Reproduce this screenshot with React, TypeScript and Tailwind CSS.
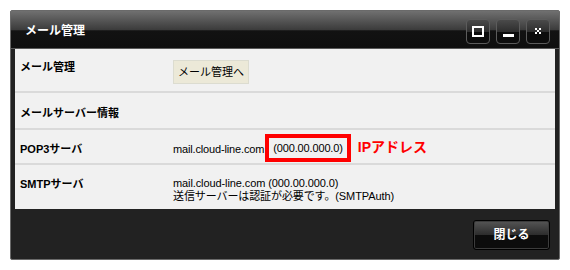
import React from "react";

const jp = { fontFamily: '"Liberation Sans", "Noto Sans CJK JP", sans-serif' };

function TitleBtn({ children }: { children: React.ReactNode }) {
  return (
    <div className="w-[24px] h-[25px] rounded-[4px] border border-[#5c5c5c] bg-[linear-gradient(to_bottom,#4a4a4a_0%,#2e2e2e_50%,#0d0d0d_51%,#0d0d0d_100%)] flex items-center justify-center">
      {children}
    </div>
  );
}

export default function App() {
  return (
    <div className="w-[570px] h-[270px] bg-white pt-[10px] pl-[10px]" style={jp}>
      <div className="w-[550px] h-[250px] border border-[#6a6a6a] bg-[#222222] rounded-[2px] flex flex-col">
        {/* title bar */}
        <div className="h-[38px] border-b border-[#5a5a5a] bg-[linear-gradient(to_bottom,#707070_0%,#3a3a3a_52%,#121212_53%,#0f0f0f_100%)] flex items-center justify-between pl-[14px] pr-[9px]">
          <span className="text-white font-bold text-[12px] leading-none mt-[2px]">メール管理</span>
          <div className="flex gap-[6px] mt-[3px]">
            <TitleBtn>
              <div className="w-[12px] h-[11px] border-2 border-white" />
            </TitleBtn>
            <TitleBtn>
              <div className="w-[11px] h-[3px] bg-white mt-[8px]" />
            </TitleBtn>
            <TitleBtn>
              <svg width="6" height="6" viewBox="0 0 6 6" shapeRendering="crispEdges">
                <rect x="0" y="0" width="2" height="2" fill="white" />
                <rect x="4" y="0" width="2" height="2" fill="white" />
                <rect x="2" y="2" width="2" height="2" fill="white" />
                <rect x="0" y="4" width="2" height="2" fill="white" />
                <rect x="4" y="4" width="2" height="2" fill="white" />
              </svg>
            </TitleBtn>
          </div>
        </div>
        {/* content */}
        <div className="mx-[4px] bg-[#f1f1f1] text-[11px] text-black">
          <div className="h-[44px] border-b-2 border-[#dadada] flex">
            <div className="w-[158px] pl-[5px] pt-[11px] font-bold leading-[14px]">メール管理</div>
            <div className="pt-[11px]">
              <div className="h-[24px] w-[76px] bg-[#ece9d8] border border-[#dcdcd0] flex items-center justify-center">メール管理へ</div>
            </div>
          </div>
          <div className="h-[37px] border-b-2 border-[#dadada] flex">
            <div className="w-[158px] pl-[5px] pt-[13px] font-bold leading-[14px]">メールサーバー情報</div>
          </div>
          <div className="h-[35px] border-b-2 border-[#dadada] flex">
            <div className="w-[158px] pl-[5px] pt-[12px] font-bold leading-[14px]">POP3サーバ</div>
            <div className="flex items-start pt-[4px]">
              <span className="pt-[8px] leading-[14px] tracking-[-0.15px]">mail.cloud-line.com</span>
              <span className="ml-[1px] h-[28px] border-[4px] border-[#ff0000] px-[4px] flex items-center leading-[14px] tracking-[-0.15px]">(000.00.000.0)</span>
              <span className="ml-[7px] pt-[4px] text-[#ff0000] font-bold text-[14px] leading-[18px]">IPアドレス</span>
            </div>
          </div>
          <div className="h-[44px] flex">
            <div className="w-[158px] pl-[5px] pt-[12px] font-bold leading-[14px]">SMTPサーバ</div>
            <div className="pt-[12px] leading-[13px] tracking-[-0.1px]">
              <div>mail.cloud-line.com (000.00.000.0)</div>
              <div>送信サーバーは認証が必要です。(SMTPAuth)</div>
            </div>
          </div>
        </div>
        {/* footer */}
        <div className="flex-1 flex justify-end items-start pt-[11px] pr-[9px]">
          <div className="w-[77px] h-[30px] rounded-[3px] border border-[#000] shadow-[inset_0_0_0_1px_#3c3c3c] bg-[linear-gradient(to_bottom,#555_0%,#2c2c2c_50%,#0c0c0c_51%,#0c0c0c_100%)] flex items-center justify-center text-white font-bold text-[12px]">
            閉じる
          </div>
        </div>
      </div>
    </div>
  );
}
